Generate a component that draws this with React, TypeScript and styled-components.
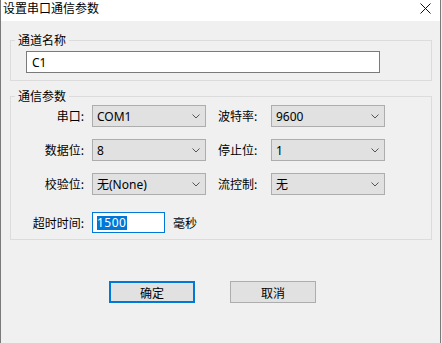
import React from "react";
import styled, { createGlobalStyle } from "styled-components";

const Global = createGlobalStyle`
  html, body { margin: 0; padding: 0; background: #f0f0f0; }
  body {
    font-family: "Noto Sans", "Noto Sans CJK SC", sans-serif;
    font-size: 12px;
    color: #000;
  }
  * { box-sizing: border-box; }
`;

const Window = styled.div`
  width: 441px;
  height: 343px;
  background: #f0f0f0;
  border-left: 1px solid #7a7a7a;
  border-right: 1px solid #7a7a7a;
  display: flex;
  flex-direction: column;
`;

const TitleBar = styled.div`
  height: 21px;
  background: #fff;
  display: flex;
  align-items: flex-start;
  justify-content: space-between;
  padding: 0 9px 0 2px;
`;

const Title = styled.span`
  font-family: "Noto Sans CJK SC", sans-serif;
  font-size: 12px;
  line-height: 16px;
`;

const CloseIcon = styled.svg`
  margin-top: 3px;
  width: 11px;
  height: 11px;
`;

const Group = styled.fieldset<{ $mt: number; $pb: number }>`
  margin: ${(p) => p.$mt}px 8px 0 9px;
  padding: 0 0 ${(p) => p.$pb}px 0;
  border: 1px solid #dcdcdc;
  min-width: 0;
`;

const Legend = styled.legend`
  margin-left: 4px;
  padding: 0 3px;
  font-family: "Noto Sans CJK SC", sans-serif;
  font-size: 12px;
  line-height: 14px;
`;

const NameInput = styled.div`
  margin: 4px 0 0 15px;
  width: 354px;
  height: 22px;
  background: #fff;
  border: 1px solid #7a7a7a;
  display: flex;
  align-items: center;
  padding-left: 5px;
  font-size: 12px;
`;

const Grid = styled.div`
  margin-top: 2px;
  display: grid;
  grid-template-columns: 81px 114px 65px 114px;
  grid-template-rows: 22px 22px 22px;
  row-gap: 12px;
  align-items: center;
`;

const Label = styled.span<{ $side: "left" | "right" }>`
  font-family: "Noto Sans CJK SC", sans-serif;
  font-size: 12px;
  line-height: 14px;
  text-align: ${(p) => (p.$side === "left" ? "right" : "left")};
  padding: ${(p) => (p.$side === "left" ? "0 8px 0 0" : "0 0 0 12px")};
  width: ${(p) => (p.$side === "left" ? "81px" : "auto")};
  flex-shrink: 0;
`;

const Select = styled.div`
  height: 22px;
  background: #e1e1e1;
  border: 1px solid #adadad;
  display: flex;
  align-items: center;
  justify-content: space-between;
  padding: 0 5px 0 4px;
  font-size: 12px;
`;

const Chevron = styled.svg`
  width: 8px;
  height: 5px;
`;

const TimeoutRow = styled.div`
  margin-top: 17px;
  display: flex;
  align-items: center;
  height: 21px;
`;

const NumberInput = styled.div`
  width: 73px;
  height: 21px;
  background: #fff;
  border: 1px solid #0078d7;
  display: flex;
  align-items: center;
  padding-left: 4px;
`;

const Selected = styled.span`
  background: #0078d7;
  color: #fff;
  line-height: 14px;
  font-size: 12px;
  letter-spacing: 0.5px;
  padding-right: 1px;
`;

const Unit = styled.span`
  margin-left: 8px;
  font-family: "Noto Sans CJK SC", sans-serif;
  font-size: 12px;
`;

const ButtonRow = styled.div`
  margin-top: 41px;
  padding-left: 108px;
  display: flex;
  gap: 35px;
`;

const Button = styled.div<{ $primary?: boolean }>`
  width: 86px;
  height: 22px;
  background: #e1e1e1;
  border: ${(p) => (p.$primary ? "2px solid #0078d7" : "1px solid #adadad")};
  display: flex;
  align-items: center;
  justify-content: center;
  font-family: "Noto Sans CJK SC", sans-serif;
  font-size: 12px;
`;

const Combo = ({ value }: { value: string }) => (
  <Select>
    <span>{value}</span>
    <Chevron viewBox="0 0 8 5">
      <polyline points="0.5,0.5 4,4 7.5,0.5" fill="none" stroke="#555" strokeWidth="1" />
    </Chevron>
  </Select>
);

export default function App() {
  return (
    <>
      <Global />
      <Window>
        <TitleBar>
          <Title>设置串口通信参数</Title>
          <CloseIcon viewBox="0 0 11 11">
            <line x1="0.5" y1="0.5" x2="10.5" y2="10.5" stroke="#111" strokeWidth="1" />
            <line x1="10.5" y1="0.5" x2="0.5" y2="10.5" stroke="#111" strokeWidth="1" />
          </CloseIcon>
        </TitleBar>

        <Group $mt={12} $pb={7}>
          <Legend>通道名称</Legend>
          <NameInput>C1</NameInput>
        </Group>

        <Group $mt={8} $pb={6}>
          <Legend>通信参数</Legend>
          <Grid>
            <Label $side="left">串口:</Label>
            <Combo value="COM1" />
            <Label $side="right">波特率:</Label>
            <Combo value="9600" />

            <Label $side="left">数据位:</Label>
            <Combo value="8" />
            <Label $side="right">停止位:</Label>
            <Combo value="1" />

            <Label $side="left">校验位:</Label>
            <Combo value="无(None)" />
            <Label $side="right">流控制:</Label>
            <Combo value="无" />
          </Grid>
          <TimeoutRow>
            <Label $side="left">超时时间:</Label>
            <NumberInput>
              <Selected>1500</Selected>
            </NumberInput>
            <Unit>毫秒</Unit>
          </TimeoutRow>
        </Group>

        <ButtonRow>
          <Button $primary>确定</Button>
          <Button>取消</Button>
        </ButtonRow>
      </Window>
    </>
  );
}
